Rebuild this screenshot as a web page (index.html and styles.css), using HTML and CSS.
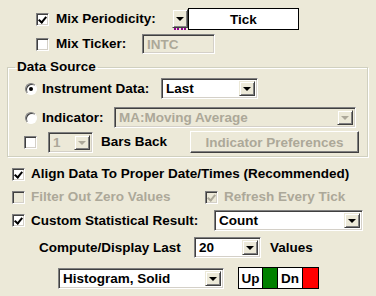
FILE: index.html
```html
<!DOCTYPE html>
<html lang="en">
<head>
  <meta charset="UTF-8" />
  <title>Statistics Settings</title>
  <link rel="stylesheet" href="styles.css">
</head>
<body>

<div class="dlg">
  <!-- periodicity -->
  <div class="row r-period">
    <span class="cb on"></span>
    <span class="lbl w-period">Mix Periodicity:</span>
    <span class="period">
      <span class="period-btn"><i class="arrow"></i></span>
      <span class="period-box">Tick</span>
    </span>
  </div>

  <div class="row r-ticker">
    <span class="cb"></span>
    <span class="lbl w-ticker">Mix Ticker:</span>
    <span class="edit disabled">INTC</span>
  </div>

  <fieldset class="group">
    <legend>Data Source</legend>

    <div class="row r-inst">
      <span class="radio on"></span>
      <span class="lbl w-inst">Instrument Data:</span>
      <span class="combo c-last"><span class="val">Last</span><span class="dd-btn"><i class="arrow"></i></span></span>
    </div>

    <div class="row r-ind">
      <span class="radio"></span>
      <span class="lbl w-ind">Indicator:</span>
      <span class="combo c-ind disabled"><span class="val">MA:Moving Average</span><span class="dd-btn"><i class="arrow"></i></span></span>
    </div>

    <div class="row r-bars">
      <span class="cb"></span>
      <span class="combo c-bars disabled"><span class="val">1</span><span class="dd-btn"><i class="arrow"></i></span></span>
      <span class="lbl w-bars">Bars Back</span>
      <span class="btn disabled">Indicator Preferences</span>
    </div>
  </fieldset>

  <div class="row r-align">
    <span class="cb on"></span>
    <span class="lbl">Align Data To Proper Date/Times (Recommended)</span>
  </div>

  <div class="row r-filter">
    <span class="cb disabled"></span>
    <span class="lbl w-filter gray">Filter Out Zero Values</span>
    <span class="cb on disabled"></span>
    <span class="lbl gray">Refresh Every Tick</span>
  </div>

  <div class="row r-custom">
    <span class="cb on"></span>
    <span class="lbl w-custom">Custom Statistical Result:</span>
    <span class="combo c-count"><span class="val">Count</span><span class="dd-btn"><i class="arrow"></i></span></span>
  </div>

  <div class="row r-compute">
    <span class="lbl w-compute">Compute/Display Last</span>
    <span class="combo c-num"><span class="val">20</span><span class="dd-btn"><i class="arrow"></i></span></span>
    <span class="lbl">Values</span>
  </div>

  <div class="row r-style">
    <span class="combo c-hist"><span class="val">Histogram, Solid</span><span class="dd-btn"><i class="arrow"></i></span></span>
    <span class="updn">
      <span class="cell txt up">Up</span>
      <span class="cell green"></span>
      <span class="cell txt dn">Dn</span>
      <span class="cell red"></span>
    </span>
  </div>
</div>

</body>
</html>
```

FILE: styles.css
```css
* { box-sizing: border-box; }

body {
  margin: 0;
  background: #ece9d8;
  font-family: "Liberation Sans", Arial, sans-serif;
  font-size: 13.5px;
  font-weight: bold;
  color: #000;
}

.dlg {
  width: 376px;
  height: 296px;
  overflow: hidden;
}

.row {
  display: flex;
  align-items: center;
  white-space: nowrap;
}

.lbl { line-height: 14px; }
.gray { color: #aca899; }

/* checkboxes */
.cb {
  flex: none;
  position: relative;
  width: 13px;
  height: 13px;
  background: #fff;
  border: 1px solid;
  border-color: #808080 #fff #fff #808080;
  box-shadow: inset 1px 1px #404040, inset -1px -1px #d4d0c8;
}

.cb.on::after {
  content: "";
  position: absolute;
  left: 3px;
  top: 1px;
  width: 3px;
  height: 6px;
  border: solid #000;
  border-width: 0 2px 2px 0;
  transform: rotate(40deg);
}

.cb.disabled { background: #ece9d8; }
.cb.disabled::after { border-color: #aca899; }

/* radio buttons */
.radio {
  flex: none;
  position: relative;
  width: 12px;
  height: 12px;
  border-radius: 50%;
  background: #fff;
  border: 1px solid;
  border-color: #808080 #fff #fff #808080;
  box-shadow: inset 1px 1px #404040;
}

.radio.on::after {
  content: "";
  position: absolute;
  left: 3px;
  top: 3px;
  width: 4px;
  height: 4px;
  border-radius: 50%;
  background: #000;
}

/* sunken fields */
.edit, .combo {
  flex: none;
  display: flex;
  align-items: center;
  background: #fff;
  border: 1px solid;
  border-color: #808080 #fff #fff #808080;
  box-shadow: inset 1px 1px #404040, inset -1px -1px #d4d0c8;
  padding: 2px;
}

.edit { padding-left: 4px; }

.combo .val {
  flex: 1;
  padding-left: 2px;
  overflow: hidden;
}

.disabled.edit, .disabled.combo {
  background: #ece9d8;
  color: #aca899;
}

.dd-btn, .period-btn {
  flex: none;
  display: flex;
  align-items: center;
  justify-content: center;
  width: 16px;
  height: 100%;
  background: #ece9d8;
  border: 1px solid;
  border-color: #ece9d8 #404040 #404040 #ece9d8;
  box-shadow: inset 1px 1px #fff, inset -1px -1px #808080;
}

.arrow {
  width: 0;
  height: 0;
  border-left: 4px solid transparent;
  border-right: 4px solid transparent;
  border-top: 4px solid #000;
  margin-top: 1px;
}

.disabled .arrow { border-top-color: #aca899; }

/* push button */
.btn {
  flex: none;
  display: flex;
  align-items: center;
  justify-content: center;
  background: #ece9d8;
  border: 1px solid;
  border-color: #fff #404040 #404040 #fff;
  box-shadow: inset -1px -1px #808080;
}

.btn.disabled { color: #aca899; }

/* rows */
.r-period { margin-top: 8px; height: 22px; padding-left: 36px; }
.w-period { margin-left: 7px; width: 116px; }

.period {
  display: flex;
  height: 22px;
}

.period-btn {
  height: 19px;
  margin-top: 1px;
  border-bottom-color: #404040;
  position: relative;
}

.period-btn::after {
  content: "";
  position: absolute;
  left: 1px;
  right: 1px;
  bottom: -3px;
  border-bottom: 2px dotted #900090;
}

.period-box {
  width: 111px;
  height: 22px;
  border: 1px solid #000;
  background: #fff;
  display: flex;
  align-items: center;
  justify-content: center;
}

.r-ticker { margin-top: 4px; height: 20px; padding-left: 36px; }
.w-ticker { margin-left: 7px; width: 86px; }
.edit.disabled { width: 73px; height: 20px; }

.group {
  margin: 6px 0 0 7px;
  width: 361px;
  padding: 0 0 3px 17px;
  border: 1px solid #d0d0bf;
  box-shadow: inset 1px 1px #fff, 1px 1px #fff;
}

.group legend {
  margin-left: -10px;
  padding: 0 2px;
  line-height: 14px;
}

.r-inst { margin-top: 4px; height: 21px; }
.w-inst { margin-left: 5px; width: 119px; }
.c-last { width: 97px; height: 21px; }

.r-ind { margin-top: 8px; height: 21px; }
.w-ind { margin-left: 5px; width: 72px; }
.c-ind { width: 242px; height: 21px; }

.r-bars { margin-top: 3px; height: 22px; margin-left: -1px; }
.c-bars { margin-left: 11px; width: 45px; height: 21px; }
.w-bars { margin-left: 8px; width: 89px; }
.btn { width: 169px; height: 22px; }

.r-align { margin-top: 7px; height: 20px; padding-left: 12px; }
.r-align .lbl { margin-left: 6px; }

.r-filter { margin-top: 3px; height: 20px; padding-left: 12px; }
.w-filter { margin-left: 6px; width: 174px; }
.r-filter .lbl:last-child { margin-left: 6px; }

.r-custom { margin-top: 3px; height: 21px; padding-left: 12px; }
.w-custom { margin-left: 6px; width: 183px; }
.c-count { width: 149px; height: 21px; }

.r-compute { margin-top: 6px; height: 21px; padding-left: 39px; }
.w-compute { width: 155px; }
.c-num { width: 67px; height: 21px; }
.r-compute .lbl:last-child { margin-left: 9px; }

.r-style { margin-top: 9px; height: 22px; padding-left: 58px; }
.c-hist { width: 166px; height: 21px; }

.updn {
  display: flex;
  margin-left: 14px;
  height: 22px;
  border: 1px solid #000;
}

.cell { height: 100%; }
.cell + .cell { border-left: 1px solid #000; }

.txt {
  background: #fff;
  display: flex;
  align-items: center;
  justify-content: center;
}

.up { width: 23px; }
.dn { width: 25px; }
.green { width: 15px; background: #008000; }
.red { width: 16px; background: #ff0000; }
```
